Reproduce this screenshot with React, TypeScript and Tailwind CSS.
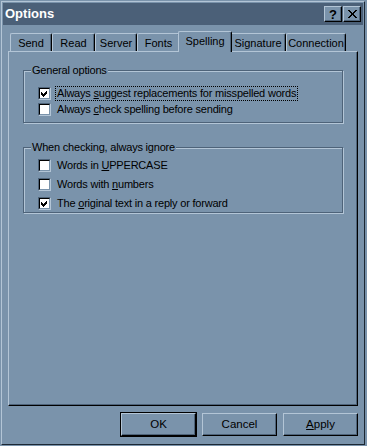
import React from "react";

const FONT = "font-['Liberation_Sans',Arial,sans-serif]";

function Check({ checked }: { checked: boolean }) {
  return (
    <div className="w-[13px] h-[13px] shrink-0 border-t border-l border-[#4e6379] border-r-[#b3c5d6] border-b-[#b3c5d6] border-r border-b">
      <div className="w-[11px] h-[11px] border-t border-l border-black border-r border-b border-r-[#7a93ab] border-b-[#7a93ab] bg-white">
        {checked && (
          <svg width="9" height="9" viewBox="0 0 9 9" shapeRendering="crispEdges">
            <path d="M1 3 L3 5 L7 1 L7 4 L3 8 L1 6 Z" fill="black" />
          </svg>
        )}
      </div>
    </div>
  );
}

function Row({
  checked,
  children,
  focus,
}: {
  checked: boolean;
  children: React.ReactNode;
  focus?: boolean;
}) {
  return (
    <div className="flex items-center h-[13px]">
      <Check checked={checked} />
      <span
        className={
          "ml-[4px] px-[1px] leading-[13px] whitespace-nowrap border border-dotted " +
          (focus ? "border-black" : "border-transparent")
        }
      >
        {children}
      </span>
    </div>
  );
}

function Group({
  label,
  children,
  className,
}: {
  label: string;
  children: React.ReactNode;
  className: string;
}) {
  return (
    <div
      className={
        "relative border border-[#4e6379] shadow-[inset_1px_1px_0_#b3c5d6,1px_1px_0_#b3c5d6] pl-[14px] " +
        className
      }
    >
      <div className="absolute -top-[8px] left-[7px] px-[1px] bg-[#7a93ab] leading-[14px] whitespace-nowrap">
        {label}
      </div>
      {children}
    </div>
  );
}

function Tab({ label, w, selected }: { label: string; w: number; selected?: boolean }) {
  if (selected) {
    return (
      <div
        style={{ width: w + 4 }}
        className="relative z-10 -mx-[2px] -mb-px h-[21px] bg-[#7a93ab] border-t border-l border-[#b3c5d6] border-r border-r-black rounded-t-[2px] shadow-[inset_-1px_0_0_#4e6379] flex justify-center pt-[2px] leading-[14px]"
      >
        {label}
      </div>
    );
  }
  return (
    <div
      style={{ width: w }}
      className="h-[18px] bg-[#7a93ab] border-t border-l border-[#b3c5d6] border-r border-r-black rounded-t-[2px] shadow-[inset_-1px_0_0_#4e6379] flex justify-center pt-[2px] leading-[14px]"
    >
      {label}
    </div>
  );
}

function Btn({ children, def }: { children: React.ReactNode; def?: boolean }) {
  return (
    <div
      className={
        "w-[75px] h-[23px] flex items-center justify-center border-t border-l border-[#b3c5d6] border-r border-b border-r-black border-b-black shadow-[inset_-1px_-1px_0_#4e6379] " +
        (def ? "outline outline-1 outline-black" : "")
      }
    >
      {children}
    </div>
  );
}

export default function App() {
  return (
    <div
      className={
        "w-[367px] h-[446px] bg-[#7a93ab] pt-[1px] pl-[1px] pr-[2px] pb-[1px] text-black text-[11px] tracking-[-0.2px] " +
        FONT
      }
    >
      <div className="h-full border-t border-l border-[#b3c5d6] border-r border-b border-r-[#1c2733] border-b-[#1c2733] p-[1px] flex flex-col">
        {/* Title bar */}
        <div className="h-[22px] bg-[#4b6078] flex items-center pl-[2px] pr-[2px]">
          <span className="text-white font-bold text-[13px] tracking-[0px]">Options</span>
          <div className="ml-auto flex gap-[1px]">
            <div className="w-[18px] h-[16px] bg-[#7a93ab] border-t border-l border-[#b3c5d6] border-r border-b border-r-black border-b-black shadow-[inset_-1px_-1px_0_#4e6379] flex items-center justify-center font-bold text-[13px] leading-none tracking-[0px]">
              ?
            </div>
            <div className="w-[18px] h-[16px] bg-[#7a93ab] border-t border-l border-[#b3c5d6] border-r border-b border-r-black border-b-black shadow-[inset_-1px_-1px_0_#4e6379] flex items-center justify-center">
              <svg width="9" height="8" viewBox="0 0 9 8" shapeRendering="crispEdges">
                <path d="M0 0 H2 L4.5 3 L7 0 H9 L5.5 4 L9 8 H7 L4.5 5 L2 8 H0 L3.5 4 Z" fill="black" />
              </svg>
            </div>
          </div>
        </div>

        <div className="px-[5px]">
          {/* Tabs */}
          <div className="mt-[6px] h-[20px] flex items-end pl-[2px] text-[11px] tracking-[0px]">
            <Tab label="Send" w={42} />
            <Tab label="Read" w={43} />
            <Tab label="Server" w={42} />
            <Tab label="Fonts" w={43} />
            <Tab label="Spelling" w={50} selected />
            <Tab label="Signature" w={56} />
            <Tab label="Connection" w={60} />
          </div>

          {/* Panel */}
          <div className="h-[355px] border-t border-l border-[#b3c5d6] border-r border-b border-r-black border-b-black shadow-[inset_-1px_-1px_0_#4e6379] px-[14px] pt-[18px]">
            <Group label="General options" className="pt-[16px] pb-[6px] flex flex-col gap-[3px]">
              <Row checked focus>
                Always <span className="underline">s</span>uggest replacements for misspelled words
              </Row>
              <Row checked={false}>
                Always <span className="underline">c</span>heck spelling before sending
              </Row>
            </Group>

            <Group label="When checking, always ignore" className="mt-[24px] pt-[11px] pb-[2px] flex flex-col gap-[6px]">
              <Row checked={false}>
                Words in <span className="underline">U</span>PPERCASE
              </Row>
              <Row checked={false}>
                Words with <span className="underline">n</span>umbers
              </Row>
              <Row checked>
                The <span className="underline">o</span>riginal text in a reply or forward
              </Row>
            </Group>
          </div>

          {/* Buttons */}
          <div className="mt-[7px] flex justify-end gap-[6px] text-[11.5px] tracking-[0px]">
            <Btn def>OK</Btn>
            <Btn>Cancel</Btn>
            <Btn>
              <span>
                <span className="underline">A</span>pply
              </span>
            </Btn>
          </div>
        </div>
      </div>
    </div>
  );
}
